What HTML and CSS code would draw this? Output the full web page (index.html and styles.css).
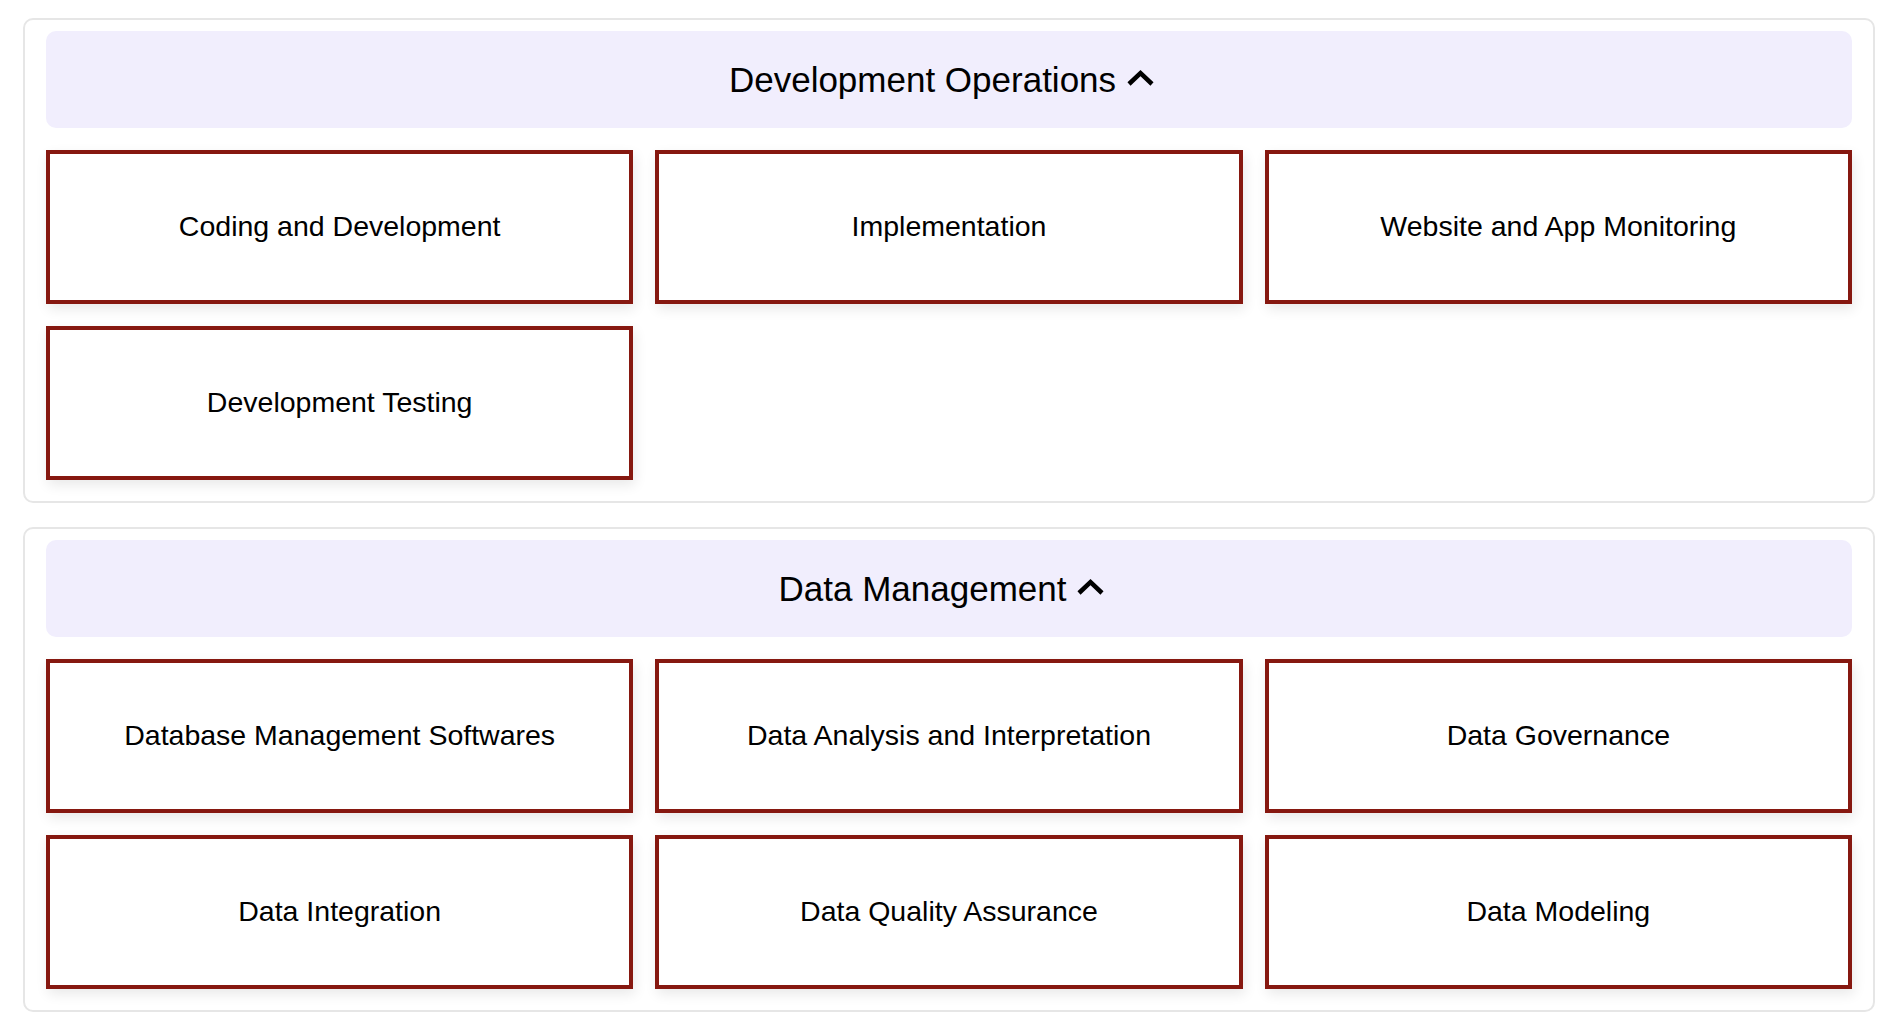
FILE: index.html
```html
<!DOCTYPE html>
<html lang="en">
  <head>
    <meta charset="UTF-8" />
    <title>Service Categories</title>
    <meta name="viewport" content="width=device-width, initial-scale=1.0" />
    <link rel="stylesheet" href="styles.css">
  </head>
  <body>
    <main class="categories">
      <!-- Development Operations -->
      <section class="category">
        <button class="category-header" type="button">
          <span>Development Operations</span>
          <svg class="chevron" width="29" height="18" viewBox="0 0 29 18" aria-hidden="true">
            <polyline points="3,15 14.5,4 26,15" />
          </svg>
        </button>
        <div class="tile-grid">
          <div class="tile">Coding and Development</div>
          <div class="tile">Implementation</div>
          <div class="tile">Website and App Monitoring</div>
          <div class="tile">Development Testing</div>
        </div>
      </section>

      <!-- Data Management -->
      <section class="category">
        <button class="category-header" type="button">
          <span>Data Management</span>
          <svg class="chevron" width="29" height="18" viewBox="0 0 29 18" aria-hidden="true">
            <polyline points="3,15 14.5,4 26,15" />
          </svg>
        </button>
        <div class="tile-grid">
          <div class="tile">Database Management Softwares</div>
          <div class="tile">Data Analysis and Interpretation</div>
          <div class="tile">Data Governance</div>
          <div class="tile">Data Integration</div>
          <div class="tile">Data Quality Assurance</div>
          <div class="tile">Data Modeling</div>
        </div>
      </section>
    </main>
  </body>
</html>
```

FILE: styles.css
```css
/* General Styling */
body {
  margin: 0;
  font-family: "Liberation Sans", Arial, sans-serif;
  background-color: #fff;
  color: #000;
}
.categories {
  display: flex;
  flex-direction: column;
  gap: 24px;
  padding: 18px 23px;
}

/* Category Card */
.category {
  border: 2px solid #e6e6e6;
  border-radius: 10px;
  padding: 11px 21px 21px;
  display: flex;
  flex-direction: column;
  gap: 22px;
}
.category-header {
  display: flex;
  align-items: center;
  justify-content: center;
  gap: 10px;
  height: 97px;
  width: 100%;
  padding: 0 14px 0 0;
  border: none;
  border-radius: 10px;
  background-color: #f1eefd;
  font-family: inherit;
  font-size: 35px;
  color: #000;
  cursor: pointer;
}
.chevron {
  margin-top: -3px;
}
.chevron polyline {
  fill: none;
  stroke: #000;
  stroke-width: 4.5;
  stroke-linejoin: miter;
}

/* Tile Styling */
.tile-grid {
  display: grid;
  grid-template-columns: repeat(3, 1fr);
  gap: 22px;
}
.tile {
  box-sizing: border-box;
  height: 154px;
  padding-bottom: 2px;
  display: flex;
  align-items: center;
  justify-content: center;
  border: 4px solid #861810;
  background-color: #fff;
  box-shadow: 2px 5px 12px rgba(0, 0, 0, 0.09);
  font-size: 28.5px;
  text-align: center;
}
```
